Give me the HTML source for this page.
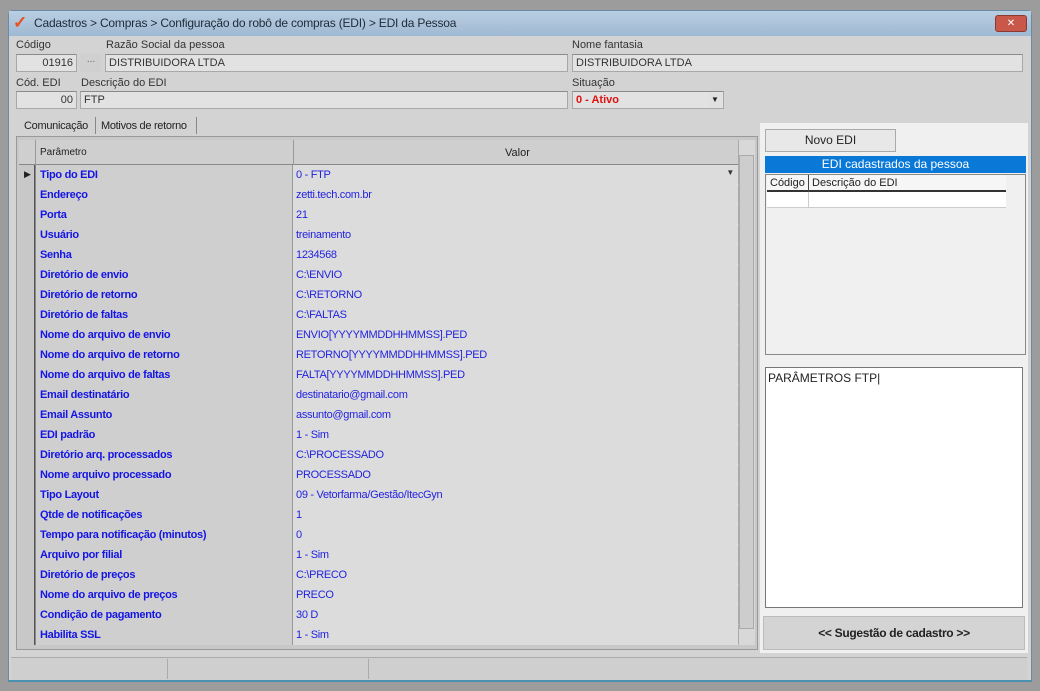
<!DOCTYPE html>
<html><head><meta charset="utf-8"><style>
*{box-sizing:border-box;margin:0;padding:0}
body{width:1040px;height:691px;background:#9c9c9c;font-family:"Liberation Sans",sans-serif;font-size:11px;color:#222;position:relative;overflow:hidden}
.a{position:absolute}
.win{left:8px;top:10px;width:1024px;height:672px;background:#d3d3d3;border:1px solid #6a8aa6;border-radius:5px 5px 0 0}
.title{left:9px;top:11px;width:1022px;height:25px;background:linear-gradient(#b9cee2,#9fb9d2);font-size:12px;color:#1e2a38;padding:5px 0 0 25px;letter-spacing:-0.2px}
.lbl{font-size:11px;color:#333}
.inp{background:#e2e2e2;border:1px solid #a8a8a8;border-top-color:#8a8a8a;height:18px;font-size:11px;padding:2px 3px;color:#333}
.row{left:19px;width:720px;height:20px;border-bottom:1px solid #bdbdbd}
.p{position:absolute;left:16px;width:258px;height:20px;background:#cfcfcf;border-left:1px solid #888;border-right:1px solid #999;color:#1414e6;font-weight:bold;padding:4px 4px;font-size:11px;letter-spacing:-0.3px}
.v{position:absolute;left:274px;width:445px;height:20px;background:#dcdcdc;color:#2222e0;padding:4px 3px;font-size:11px;letter-spacing:-0.3px}
.ind{position:absolute;left:0;width:16px;height:20px;background:#c8c8c8;border-right:1px solid #555}
</style></head><body>
<div class="a win"></div>
<div class="a title">Cadastros &gt; Compras &gt; Configuração do robô de compras (EDI) &gt; EDI da Pessoa</div>
<div class="a" style="left:13px;top:13px;color:#e8501c;font-weight:bold;font-size:17px">✓</div>
<div class="a" style="left:995px;top:15px;width:32px;height:17px;background:#c9584a;border:1px solid #8a3a30;border-radius:3px;color:#fff;text-align:center;font-size:10px;line-height:15px">✕</div>

<div class="a lbl" style="left:16px;top:39px">Código</div>
<div class="a lbl" style="left:106px;top:39px">Razão Social da pessoa</div>
<div class="a lbl" style="left:572px;top:39px">Nome fantasia</div>
<div class="a inp" style="left:16px;top:54px;width:61px;text-align:right">01916</div>
<div class="a" style="left:80px;top:54px;width:22px;height:18px;background:#d0d0d0;color:#666;text-align:center;font-size:10px">...</div>
<div class="a inp" style="left:105px;top:54px;width:463px">DISTRIBUIDORA LTDA</div>
<div class="a inp" style="left:572px;top:54px;width:451px">DISTRIBUIDORA LTDA</div>

<div class="a lbl" style="left:16px;top:77px">Cód. EDI</div>
<div class="a lbl" style="left:81px;top:77px">Descrição do EDI</div>
<div class="a lbl" style="left:572px;top:77px">Situação</div>
<div class="a inp" style="left:16px;top:91px;width:61px;text-align:right">00</div>
<div class="a inp" style="left:80px;top:91px;width:488px">FTP</div>
<div class="a inp" style="left:572px;top:91px;width:152px;color:#e01010;font-weight:bold">0 - Ativo</div>
<div class="a" style="left:708px;top:93px;width:14px;height:14px;background:#e0e0e0;font-size:8px;text-align:center;line-height:14px">▼</div>

<div class="a" style="left:24px;top:120px;font-size:11px;letter-spacing:-0.3px">Comunicação</div>
<div class="a" style="left:95px;top:117px;width:1px;height:17px;background:#888"></div>
<div class="a" style="left:101px;top:120px;font-size:11px;letter-spacing:-0.3px">Motivos de retorno</div>
<div class="a" style="left:196px;top:117px;width:1px;height:17px;background:#888"></div>

<div class="a" style="left:16px;top:136px;width:742px;height:514px;background:#c8c8c8;border:1px solid #999"></div>
<div class="a" style="left:19px;top:140px;width:720px;height:25px;background:#cfcfcf;border-bottom:1px solid #888"></div>
<div class="a" style="left:35px;top:140px;width:1px;height:25px;background:#999"></div>
<div class="a" style="left:293px;top:140px;width:1px;height:25px;background:#999"></div>
<div class="a" style="left:40px;top:147px;font-size:10px">Parâmetro</div>
<div class="a" style="left:505px;top:147px;font-size:11px">Valor</div>
<div class="a" style="left:738px;top:140px;width:17px;height:505px;background:#d8d8d8;border-left:1px solid #aaa"></div>
<div class="a" style="left:739px;top:155px;width:15px;height:474px;background:#cdcdcd;border:1px solid #aaa"></div>

<div id="g"></div>

<div class="a" style="left:760px;top:123px;width:268px;height:530px;background:#f0f0f0"></div>
<div class="a" style="left:765px;top:129px;width:131px;height:23px;background:#e8e8e8;border:1px solid #aaa;text-align:center;line-height:21px;font-size:12px">Novo EDI</div>
<div class="a" style="left:765px;top:156px;width:261px;height:17px;background:#0a78d7;color:#fff;text-align:center;font-size:12px;line-height:16px">EDI cadastrados da pessoa</div>
<div class="a" style="left:765px;top:174px;width:261px;height:181px;background:#f0f0f0;border:1px solid #888"></div>
<div class="a" style="left:767px;top:175px;width:239px;height:17px;background:#f6f6f6;border-bottom:2px solid #333;font-size:11px"><span style="position:absolute;left:3px;top:2px">Código</span><span style="position:absolute;left:41px;top:0;width:1px;height:17px;background:#444"></span><span style="position:absolute;left:45px;top:2px">Descrição do EDI</span></div>
<div class="a" style="left:767px;top:192px;width:239px;height:16px;background:#fff;border-bottom:1px solid #ccc"><span style="position:absolute;left:41px;top:0;width:1px;height:16px;background:#ccc"></span></div>
<div class="a" style="left:765px;top:367px;width:258px;height:241px;background:#fff;border:1px solid #777;font-size:12px;padding:3px 2px">PARÂMETROS FTP|</div>
<div class="a" style="left:763px;top:616px;width:262px;height:34px;background:#d4d4d4;border:1px solid #bbb;text-align:center;line-height:32px;font-weight:bold;font-size:12px;color:#222;letter-spacing:-0.3px">&lt;&lt; Sugestão de cadastro &gt;&gt;</div>

<div class="a" style="left:11px;top:657px;width:1016px;height:23px;background:#cfcfcf;border-top:1px solid #aaa"></div>
<div class="a" style="left:167px;top:659px;width:1px;height:20px;background:#aaa"></div>
<div class="a" style="left:368px;top:659px;width:1px;height:20px;background:#aaa"></div>
<div class="a" style="left:8px;top:680px;width:1024px;height:2px;background:#4a90b0"></div>

<script>
var d=[["Tipo do EDI","0 - FTP"],["Endereço","zetti.tech.com.br"],["Porta","21"],["Usuário","treinamento"],["Senha","1234568"],["Diretório de envio","C:\\ENVIO"],["Diretório de retorno","C:\\RETORNO"],["Diretório de faltas","C:\\FALTAS"],["Nome do arquivo de envio","ENVIO[YYYYMMDDHHMMSS].PED"],["Nome do arquivo de retorno","RETORNO[YYYYMMDDHHMMSS].PED"],["Nome do arquivo de faltas","FALTA[YYYYMMDDHHMMSS].PED"],["Email destinatário","destinatario@gmail.com"],["Email Assunto","assunto@gmail.com"],["EDI padrão","1 - Sim"],["Diretório arq. processados","C:\\PROCESSADO"],["Nome arquivo processado","PROCESSADO"],["Tipo Layout","09 - Vetorfarma/Gestão/ItecGyn"],["Qtde de notificações","1"],["Tempo para notificação (minutos)","0"],["Arquivo por filial","1 - Sim"],["Diretório de preços","C:\\PRECO"],["Nome do arquivo de preços","PRECO"],["Condição de pagamento","30 D"],["Habilita SSL","1 - Sim"]];
var h="";d.forEach(function(r,i){h+='<div class="a row" style="top:'+(165+i*20)+'px"><div class="ind">'+(i==0?'<span style="font-size:9px;position:absolute;left:5px;top:4px">▶</span>':'')+'</div><div class="p">'+r[0]+'</div><div class="v">'+r[1]+(i==0?'<span style="position:absolute;right:4px;top:3px;font-size:8px;color:#333">▼</span>':'')+'</div></div>';});
document.getElementById("g").innerHTML=h;
</script>
</body></html>
